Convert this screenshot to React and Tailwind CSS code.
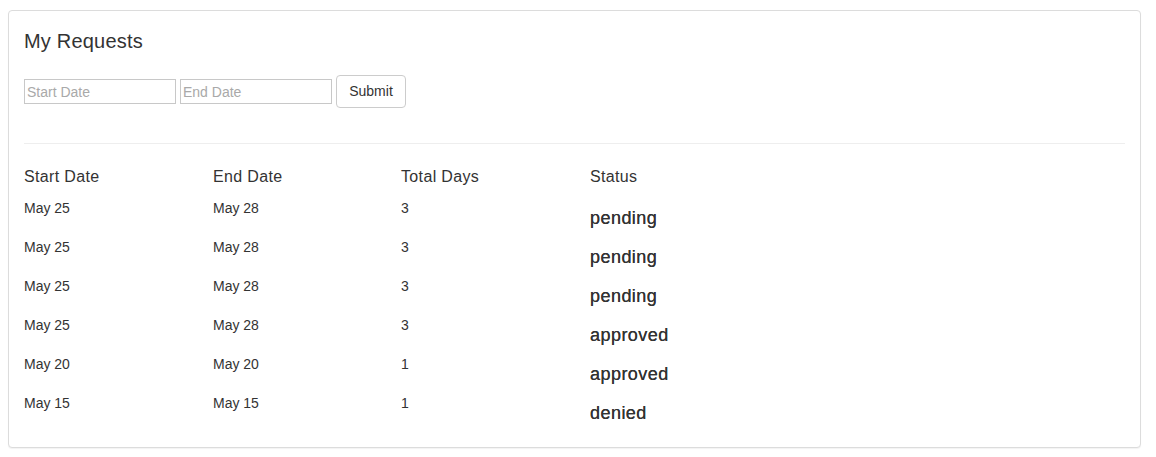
import React from "react";

const rows = [
  ["May 25", "May 28", "3", "pending"],
  ["May 25", "May 28", "3", "pending"],
  ["May 25", "May 28", "3", "pending"],
  ["May 25", "May 28", "3", "approved"],
  ["May 20", "May 20", "1", "approved"],
  ["May 15", "May 15", "1", "denied"],
];

export default function App() {
  return (
    <div
      className="w-[1156px] h-[457px] bg-white pl-[8px] pr-[15px] pt-[10px] text-[#333]"
      style={{ fontFamily: '"Liberation Sans", Arial, sans-serif' }}
    >
      <div className="border border-[#dcdcdc] rounded-[4px] bg-white shadow-[0_1px_1px_rgba(0,0,0,0.05)] px-[15px] pt-[19px] pb-[15px]">
        <h3 className="text-[20px] leading-[22px] tracking-[0.2px] text-[#333]">My Requests</h3>
        <div className="flex items-center gap-[4px] mt-[23px]">
          <input
            className="w-[152px] h-[25px] border border-[#c8c8c8] px-[2px] text-[14px] placeholder:text-[#a9a9a9] outline-none"
            placeholder="Start Date"
          />
          <input
            className="w-[152px] h-[25px] border border-[#c8c8c8] px-[2px] text-[14px] placeholder:text-[#a9a9a9] outline-none"
            placeholder="End Date"
          />
          <button className="h-[33px] w-[70px] border border-[#ccc] rounded-[4px] bg-white text-[14px] text-[#333]">
            Submit
          </button>
        </div>
        <div className="h-px bg-[#eee] mt-[35px]" />
        <div className="grid grid-cols-[189px_188px_189px_1fr] mt-[22px] text-[16px] leading-[22px] tracking-[0.35px]">
          <div>Start Date</div>
          <div>End Date</div>
          <div>Total Days</div>
          <div>Status</div>
        </div>
        <div className="mt-[10px]">
          {rows.map((r, i) => (
            <div key={i} className="grid grid-cols-[189px_188px_189px_1fr] h-[39px] text-[14px] leading-[20px]">
              <div>{r[0]}</div>
              <div>{r[1]}</div>
              <div>{r[2]}</div>
              <div className="text-[18px] leading-[19.5px] mt-[11px] tracking-[0.45px] text-[#333] [text-shadow:0_0_0.4px_#333]">
                {r[3]}
              </div>
            </div>
          ))}
        </div>
      </div>
    </div>
  );
}
